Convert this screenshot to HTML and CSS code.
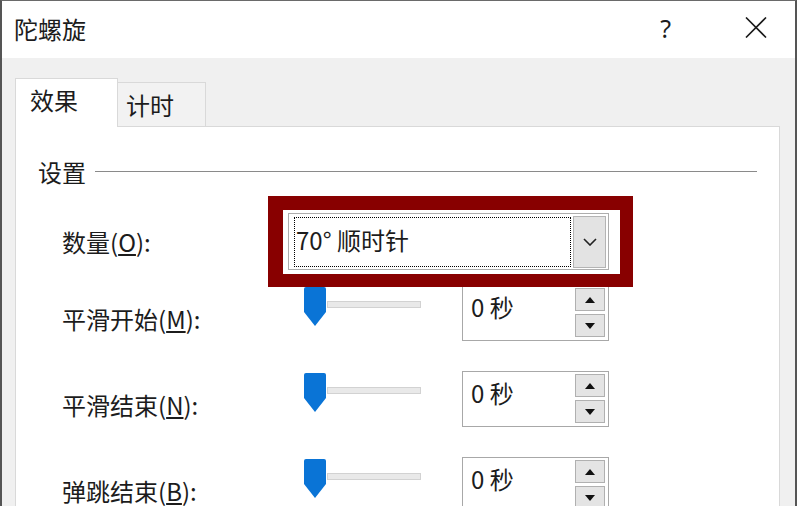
FILE: index.html
```html
<!DOCTYPE html>
<html lang="zh-CN">
<head>
<meta charset="utf-8">
<title>陀螺旋</title>
<link rel="stylesheet" href="styles.css">
</head>
<body>
<div class="window">
  <div class="titlebar">
    <span class="title">陀螺旋</span>
    <span class="help">?</span>
    <svg class="close" width="22" height="21" viewBox="0 0 22 21"><path d="M1 0.5 L21 20.5 M21 0.5 L1 20.5" stroke="#1a1a1a" stroke-width="1.6" fill="none"/></svg>
  </div>
  <div class="content">
    <div class="tabs">
      <div class="tab active">效果</div>
      <div class="tab">计时</div>
    </div>
    <div class="panel">
      <div class="group-head"><span>设置</span><div class="rule"></div></div>
      <div class="rows">
        <div class="row row-combo">
          <label class="label label-combo">数量(<u>O</u>):</label>
          <div class="combo-wrap">
            <div class="highlight"></div>
            <div class="combo">
              <div class="focus">70° 顺时针</div>
              <div class="drop"><svg width="14" height="8" viewBox="0 0 14 8"><path d="M1 1 L7 7 L13 1" stroke="#222" stroke-width="1.6" fill="none"/></svg></div>
            </div>
          </div>
        </div>
        <div class="row row-slider first">
          <label class="label">平滑开始(<u>M</u>):</label>
          <div class="slider">
            <svg class="thumb" width="22" height="39" viewBox="0 0 22 39"><path d="M2 0 H20 Q22 0 22 2 V25 L11 39 L0 25 V2 Q0 0 2 0 Z" fill="#0a74d6"/></svg>
            <div class="track"></div>
          </div>
          <div class="spin">
            <span class="spin-val">0 秒</span>
            <div class="spin-btns">
              <div class="sbtn"><span class="tri up"></span></div>
              <div class="sbtn"><span class="tri down"></span></div>
            </div>
          </div>
        </div>
        <div class="row row-slider">
          <label class="label">平滑结束(<u>N</u>):</label>
          <div class="slider">
            <svg class="thumb" width="22" height="39" viewBox="0 0 22 39"><path d="M2 0 H20 Q22 0 22 2 V25 L11 39 L0 25 V2 Q0 0 2 0 Z" fill="#0a74d6"/></svg>
            <div class="track"></div>
          </div>
          <div class="spin">
            <span class="spin-val">0 秒</span>
            <div class="spin-btns">
              <div class="sbtn"><span class="tri up"></span></div>
              <div class="sbtn"><span class="tri down"></span></div>
            </div>
          </div>
        </div>
        <div class="row row-slider">
          <label class="label">弹跳结束(<u>B</u>):</label>
          <div class="slider">
            <svg class="thumb" width="22" height="39" viewBox="0 0 22 39"><path d="M2 0 H20 Q22 0 22 2 V25 L11 39 L0 25 V2 Q0 0 2 0 Z" fill="#0a74d6"/></svg>
            <div class="track"></div>
          </div>
          <div class="spin">
            <span class="spin-val">0 秒</span>
            <div class="spin-btns">
              <div class="sbtn"><span class="tri up"></span></div>
              <div class="sbtn"><span class="tri down"></span></div>
            </div>
          </div>
        </div>
      </div>
    </div>
  </div>
</div>
</body>
</html>
```
FILE: styles.css
```css
html, body {
  margin: 0;
  padding: 0;
  background: #ffffff;
}
body {
  width: 798px;
  height: 506px;
  overflow: hidden;
  font-family: "Noto Sans CJK SC", "Noto Sans", sans-serif;
  color: #1c1c1c;
}
.window {
  box-sizing: border-box;
  width: 797px;
  height: 506px;
  border-top: 1px solid #6a6a6a;
  border-left: 2px solid #555555;
  border-right: 2px solid #555555;
  overflow: hidden;
  background: #f0f0f0;
}
.titlebar {
  height: 57px;
  background: #ffffff;
  display: flex;
  align-items: center;
  padding-left: 12px;
  padding-right: 28px;
}
.title {
  font-size: 24px;
  line-height: 30px;
  margin-top: -2px;
}
.help {
  margin-left: auto;
  margin-right: 74px;
  font-size: 25px;
  line-height: 30px;
  font-family: "Noto Sans", "DejaVu Sans", sans-serif;
  margin-top: -4px;
}
.close {
  display: block;
  margin-top: -5px;
}
.content {
  padding: 20px 15px 0 13px;
}
.tabs {
  display: flex;
  align-items: flex-end;
  height: 48px;
}
.tab {
  box-sizing: border-box;
  font-size: 24px;
  line-height: 30px;
  border: 1px solid #d9d9d9;
  border-bottom: none;
}
.tab.active {
  width: 103px;
  height: 49px;
  background: #ffffff;
  padding: 6px 0 0 14px;
  position: relative;
  z-index: 1;
  margin-bottom: -1px;
}
.tab:not(.active) {
  width: 89px;
  height: 44px;
  margin-left: -1px;
  background: #f2f2f2;
  padding: 7px 0 0 9px;
  border-left: none;
}
.panel {
  box-sizing: border-box;
  border: 1px solid #d9d9d9;
  background: #ffffff;
  height: 420px;
  padding: 30px 22px 0 22px;
}
.group-head {
  display: flex;
  align-items: center;
  font-size: 24px;
  line-height: 30px;
}
.rule {
  flex: 1;
  height: 1px;
  background: #8a8a8a;
  margin-left: 9px;
  margin-top: -2px;
}
.rows {
  margin-top: 26px;
}
.row {
  display: flex;
}
.label {
  box-sizing: border-box;
  font-size: 24px;
  line-height: 30px;
  padding-left: 24px;
}
.row-combo {
  height: 57px;
  align-items: center;
}
.label-combo {
  width: 250px;
}
.combo-wrap {
  position: relative;
}
.highlight {
  position: absolute;
  top: -17px;
  left: -20px;
  right: -24px;
  bottom: -17px;
  border-style: solid;
  border-color: #880000;
  border-width: 14px 13px 13px 15px;
  background: #ffffff;
  z-index: 1;
}
.combo {
  position: relative;
  z-index: 2;
  box-sizing: border-box;
  width: 321px;
  height: 57px;
  border: 1px solid #adadad;
  background: #ffffff;
  display: flex;
  align-items: center;
  padding-left: 5px;
  gap: 2px;
}
.focus {
  box-sizing: border-box;
  width: 277px;
  height: 50px;
  border: 1px dotted #000;
  font-size: 24px;
  line-height: 44px;
  padding-left: 1px;
  margin-top: 1px;
}
.drop {
  box-sizing: border-box;
  width: 33px;
  height: 52px;
  border: 1px solid #b4b4b4;
  background: #e3e3e3;
  display: flex;
  align-items: center;
  justify-content: center;
}
.row-slider {
  height: 56px;
  align-items: flex-start;
  margin-top: 30px;
}
.row-slider.first {
  margin-top: 15px;
}
.row-slider .label {
  width: 266px;
  line-height: 26px;
  margin-top: 21px;
}
.slider {
  width: 117px;
  margin-right: 41px;
  display: flex;
  align-items: flex-start;
}
.thumb {
  display: block;
  margin-top: 2px;
  flex: none;
}
.track {
  box-sizing: border-box;
  margin-left: 1px;
  margin-top: 16px;
  width: 94px;
  height: 7px;
  background: #e9e9e9;
  border: 1px solid #d2d2d2;
}
.spin {
  box-sizing: border-box;
  width: 147px;
  height: 56px;
  border: 1px solid #a8a8a8;
  background: #ffffff;
  display: flex;
  justify-content: space-between;
}
.spin-val {
  font-size: 24px;
  line-height: 30px;
  margin: 6px 0 0 8px;
}
.spin-btns {
  display: flex;
  flex-direction: column;
  gap: 3px;
  margin: 2px 3px 0 0;
}
.sbtn {
  box-sizing: border-box;
  width: 30px;
  height: 23px;
  border: 1px solid #b0b0b0;
  background: #e4e4e4;
  display: flex;
  align-items: center;
  justify-content: center;
}
.tri {
  width: 0;
  height: 0;
  border-left: 5px solid transparent;
  border-right: 5px solid transparent;
}
.tri.up {
  border-bottom: 6px solid #111;
}
.tri.down {
  border-top: 6px solid #111;
}
```
